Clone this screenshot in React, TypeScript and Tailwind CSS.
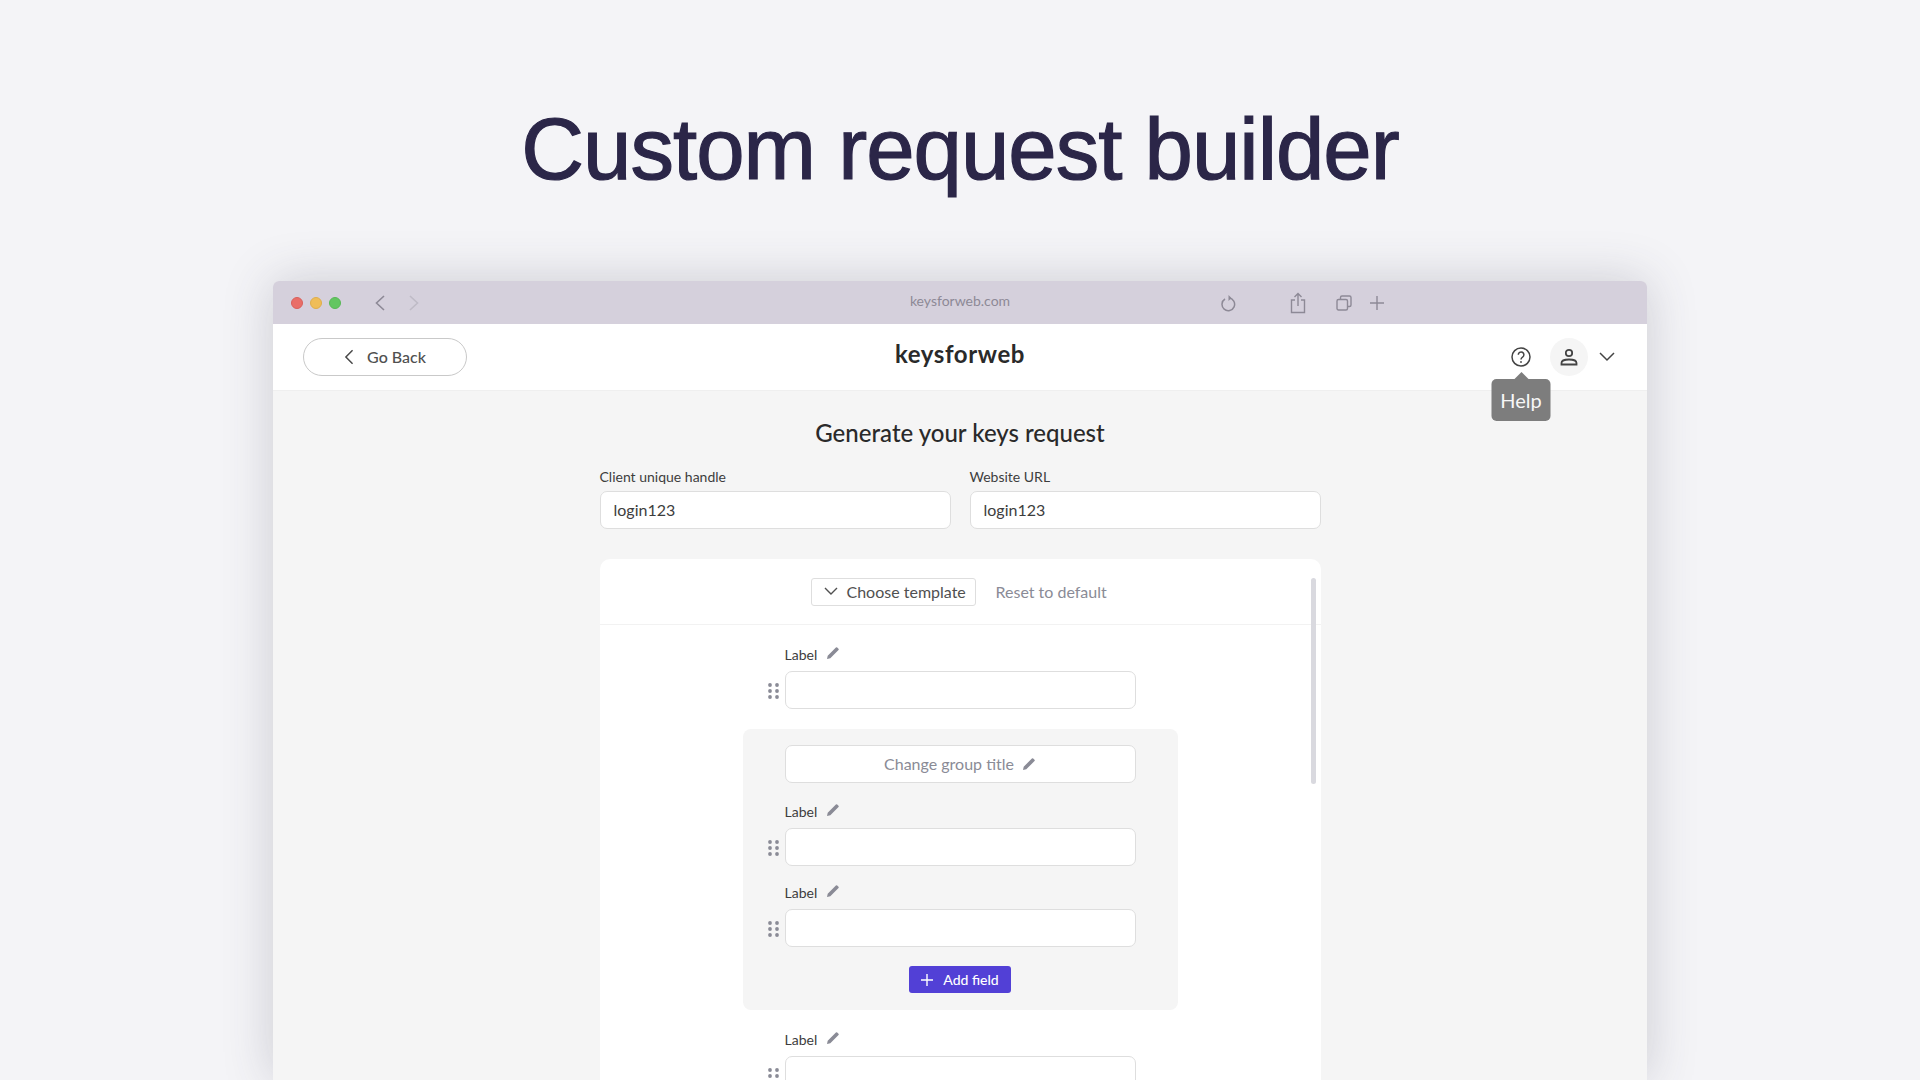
import React from "react";

const font = "font-['Lato','Noto_Sans',sans-serif]";

function Pencil({ className = "" }: { className?: string }) {
  return (
    <svg viewBox="0 0 14 14" className={`w-[14px] h-[14px] ${className}`} fill="#8a8b96">
      <path d="M1 13l.7-3.3L9.9 1.5a.9.9 0 0 1 1.3 0l1.3 1.3a.9.9 0 0 1 0 1.3L4.3 12.3z" />
    </svg>
  );
}

function Dots() {
  return (
    <svg viewBox="0 0 11 16" className="w-[11px] h-[16px]" fill="#8a8b96">
      {[2, 8, 14].map((y) => (
        <React.Fragment key={y}>
          <circle cx="2" cy={y} r="1.9" />
          <circle cx="9" cy={y} r="1.9" />
        </React.Fragment>
      ))}
    </svg>
  );
}

function Field({ mt = "" }: { mt?: string }) {
  return (
    <div className={`w-[351px] ${mt}`}>
      <div className="h-[22px] flex items-center gap-[9px] text-[14px] text-[#3d3d3d]">
        <span>Label</span>
        <Pencil className="-mt-[3px]" />
      </div>
      <div className="relative mt-[6px]">
        <div className="absolute -left-[17px] top-[12px]">
          <Dots />
        </div>
        <div className="h-[38px] bg-white border border-[#dedede] rounded-[7px]" />
      </div>
    </div>
  );
}

function TextInput({ label, value }: { label: string; value: string }) {
  return (
    <div className="w-[351px]">
      <div className="h-[22px] flex items-center text-[14px] text-[#3d3d3d]">{label}</div>
      <div className="mt-[4px] h-[38px] bg-white border border-[#dedede] rounded-[7px] flex items-center px-[13px] text-[16px] text-[#3d3d3d]">
        {value}
      </div>
    </div>
  );
}

export default function App() {
  return (
    <div className={`w-full h-[1080px] overflow-hidden bg-[#f4f4f7] ${font}`}>
      <h1 className="pt-[99px] h-[281px] text-center font-['Liberation_Sans',sans-serif] text-[87px] leading-[100px] tracking-[-1px] text-[#2b2648] [-webkit-text-stroke:1.2px_#2b2648]">
        Custom request builder
      </h1>

      <div className="w-[1374px] h-[799px] mx-auto rounded-t-[6px] overflow-hidden bg-[#f5f5f5] shadow-[0_0_50px_rgba(60,60,80,0.22)]">
        {/* Browser chrome */}
        <div className="h-[43px] bg-[#d5d0dc] flex items-center pl-[18px] pr-[16px] relative">
          <div className="flex gap-[7px]">
            <span className="w-[12px] h-[12px] rounded-full bg-[#e96e68] border border-[#d9605b]" />
            <span className="w-[12px] h-[12px] rounded-full bg-[#efbd58] border border-[#dfae4a]" />
            <span className="w-[12px] h-[12px] rounded-full bg-[#63c661] border border-[#58b856]" />
          </div>
          <svg viewBox="0 0 12 18" className="w-[12px] h-[18px] ml-[33px]" fill="none" stroke="#8d8996" strokeWidth="1.6">
            <path d="M10 2L2.5 9l7.5 7" />
          </svg>
          <svg viewBox="0 0 12 18" className="w-[12px] h-[18px] ml-[22px]" fill="none" stroke="#bfbbc6" strokeWidth="1.6">
            <path d="M2 2l7.5 7L2 16" />
          </svg>
          <div className="absolute left-0 right-0 top-[10px] text-center text-[14px] leading-[20px] text-[#8d8996]">keysforweb.com</div>
          <svg viewBox="0 0 16 18" className="absolute left-[947px] top-[13px] w-[16px] h-[18px]" fill="none" stroke="#8d8996" strokeWidth="1.5">
            <path d="M5 5a6.3 6.3 0 1 0 4-.9" />
            <path d="M8.5 1v6l3-3z" fill="#8d8996" stroke="none" />
          </svg>
          <svg viewBox="0 0 16 22" className="absolute left-[1017px] top-[11px] w-[16px] h-[22px]" fill="none" stroke="#8d8996" strokeWidth="1.4">
            <path d="M5 8H1.5v12.5h13V8H11" />
            <path d="M8 14V2M4.5 5L8 1.5 11.5 5" />
          </svg>
          <svg viewBox="0 0 16 16" className="absolute left-[1063px] top-[14px] w-[16px] h-[16px]" fill="none" stroke="#8d8996" strokeWidth="1.4">
            <rect x="1" y="4.5" width="10.5" height="10.5" rx="1.5" />
            <path d="M4.5 4V2.5A1.5 1.5 0 0 1 6 1h7.5A1.5 1.5 0 0 1 15 2.5V10a1.5 1.5 0 0 1-1.5 1.5H12" />
          </svg>
          <svg viewBox="0 0 14 14" className="absolute left-[1097px] top-[15px] w-[14px] h-[14px]" stroke="#8d8996" strokeWidth="1.4">
            <path d="M7 0v14M0 7h14" />
          </svg>
        </div>

        {/* App nav */}
        <div className="h-[67px] bg-white border-b border-[#efefef] flex items-center justify-between pl-[30px] pr-[32px] relative">
          <div className="w-[164px] h-[38px] rounded-full border border-[#c9c9c9] flex items-center justify-center gap-[13px] text-[16px] font-medium text-[#505050]">
            <svg viewBox="0 0 10 18" className="w-[10px] h-[16px]" fill="none" stroke="#4a4a4a" strokeWidth="1.7">
              <path d="M9 1.5L1.5 9 9 16.5" />
            </svg>
            <span>Go Back</span>
          </div>
          <div className="absolute left-0 right-0 top-[15px] text-center text-[24px] leading-[30px] font-bold tracking-[0.6px] text-[#2a2a2a]">keysforweb</div>
          <div className="flex items-center">
            <div className="relative w-[20px] h-[20px]">
              <svg viewBox="0 0 20 20" className="w-[20px] h-[20px]" fill="none" stroke="#444" strokeWidth="1.5">
                <circle cx="10" cy="10" r="9" />
                <path d="M7.3 7.8a2.8 2.8 0 1 1 4.3 2.3c-1 .7-1.6 1.1-1.6 2.4" />
                <circle cx="10" cy="15" r=".9" fill="#444" stroke="none" />
              </svg>
              <div className="absolute left-1/2 -translate-x-1/2 top-[32px] w-[59px] h-[42px] rounded-[5px] bg-[#7d7d7d] flex items-center justify-center text-[20px] text-[#f7f7f7] z-10">
                Help
                <span className="absolute left-1/2 -translate-x-1/2 -top-[7px] w-0 h-0 border-x-[7px] border-x-transparent border-b-[7px] border-b-[#7d7d7d]" />
              </div>
            </div>
            <div className="ml-[19px] w-[38px] h-[38px] rounded-full bg-[#f5f5f5] flex items-center justify-center">
              <svg viewBox="0 0 18 18" className="w-[18px] h-[18px]" fill="none" stroke="#444" strokeWidth="1.8">
                <circle cx="9" cy="5" r="3.2" />
                <path d="M1.5 16.5v-1.5c0-2 2.5-3.5 7.5-3.5s7.5 1.5 7.5 3.5v1.5z" />
              </svg>
            </div>
            <svg viewBox="0 0 16 10" className="ml-[11px] w-[16px] h-[10px]" fill="none" stroke="#444" strokeWidth="1.5">
              <path d="M1 1l7 7 7-7" />
            </svg>
          </div>
        </div>

        {/* Content */}
        <div className="w-[721px] mx-auto text-[#3d3d3d]">
          <h2 className="pt-[26px] h-[74px] text-center text-[24px] leading-[32px] font-medium text-[#2a2a2a]">Generate your keys request</h2>
          <div className="flex justify-between">
            <TextInput label="Client unique handle" value="login123" />
            <TextInput label="Website URL" value="login123" />
          </div>

          <div className="relative mt-[30px] h-[600px] bg-white rounded-t-[10px]">
            <div className="absolute right-[5px] top-[19px] w-[5px] h-[206px] rounded-full bg-[#d9d9df]" />
            <div className="h-[66px] border-b border-[#f2f2f2] flex items-center justify-center pr-[-0px]">
              <div className="ml-[2px] w-[165px] h-[28px] border border-[#dedede] rounded-[3px] flex items-center pl-[12px] gap-[9px] text-[16px] text-[#505050]">
                <svg viewBox="0 0 14 9" className="w-[14px] h-[9px]" fill="none" stroke="#505050" strokeWidth="1.4">
                  <path d="M1 1l6 6 6-6" />
                </svg>
                <span>Choose template</span>
              </div>
              <span className="ml-[20px] w-[116px] text-[16px] text-[#8a8b96]">Reset to default</span>
            </div>

            <div className="flex flex-col items-center pt-[18px]">
              <Field />
              <div className="mt-[20px] w-[435px] h-[281px] bg-[#f5f5f5] rounded-[8px] flex flex-col items-center pt-[16px]">
                <div className="w-[351px] h-[38px] bg-white border border-[#dedede] rounded-[7px] flex items-center justify-center gap-[8px] text-[16px] text-[#8a8b96]">
                  <span>Change group title</span>
                  <Pencil />
                </div>
                <Field mt="mt-[17px]" />
                <Field mt="mt-[15px]" />
                <div className="mt-[19px] w-[102px] h-[27px] bg-[#5240d6] rounded-[3px] flex items-center justify-center gap-[10px] text-[14px] font-medium text-white">
                  <svg viewBox="0 0 12 12" className="w-[12px] h-[12px]" stroke="#fff" strokeWidth="1.4">
                    <path d="M6 0v12M0 6h12" />
                  </svg>
                  <span>Add field</span>
                </div>
              </div>
              <Field mt="mt-[18px]" />
            </div>
          </div>
        </div>
      </div>
    </div>
  );
}
